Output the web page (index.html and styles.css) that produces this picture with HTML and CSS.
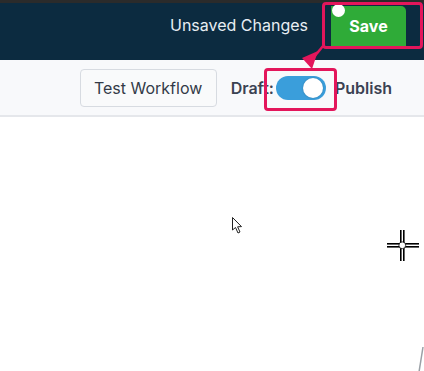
FILE: index.html
```html
<!DOCTYPE html>
<html lang="en">
<head>
    <meta charset="UTF-8">
    <meta name="viewport" content="width=device-width, initial-scale=1.0">
    <title>Workflow Editor</title>
    <link rel="stylesheet" href="styles.css">
</head>
<body>
    <header class="topbar">
        <span class="unsaved">Unsaved Changes</span>
        <button type="button" class="save-btn">Save</button>
        <span class="save-dot"></span>
    </header>

    <div class="toolbar">
        <button type="button" class="test-btn">Test Workflow</button>
        <span class="mode-label">Draft:</span>
        <span class="toggle"><span class="knob"></span></span>
        <span class="mode-label publish">Publish</span>
    </div>

    <main class="canvas"></main>

    <!-- annotation overlay -->
    <div class="mark mark-save"></div>
    <div class="mark mark-toggle"></div>
    <svg class="arrow" width="40" height="40" viewBox="0 0 40 40">
        <line x1="23" y1="3" x2="14" y2="14" stroke="#e3165b" stroke-width="2.5" />
        <polygon points="2,15 18,8 12,26" fill="#e3165b" />
    </svg>

    <svg class="pointer" width="14" height="20" viewBox="0 0 14 20">
        <path d="M1.5 1.5 L1.5 14 L4.5 11.5 L7 17 L9 16 L6.6 10.8 L10.5 10.6 Z" fill="#fff" stroke="#222" stroke-width="1" stroke-linejoin="round" />
    </svg>

    <svg class="crosshair" width="34" height="34" viewBox="0 0 34 34">
        <rect x="14" y="1" width="1.6" height="31" fill="#000" />
        <rect x="17" y="1" width="1.6" height="31" fill="#000" />
        <rect x="1" y="14" width="32" height="1.6" fill="#000" />
        <rect x="1" y="17" width="32" height="1.6" fill="#000" />
        <circle cx="16.3" cy="16.3" r="3.4" fill="#fff" stroke="#000" stroke-width="0.8" />
    </svg>

    <svg class="corner-line" width="10" height="26" viewBox="0 0 10 26">
        <path d="M9 1 L5 26" stroke="#9aa0a6" stroke-width="1.5" fill="none" />
    </svg>
</body>
</html>
```

FILE: styles.css
```css
body {
    margin: 0;
    font-family: 'Inter', 'Liberation Sans', sans-serif;
    background-color: #fff;
    height: 100vh;
    overflow: hidden;
}

.topbar {
    position: relative;
    box-sizing: border-box;
    height: 60px;
    border-top: 3px solid #2b2b2b;
    background-color: #0c2b40;
    display: flex;
    justify-content: flex-end;
    align-items: flex-start;
    padding: 3px 18px 0;
    gap: 23px;
}

.unsaved {
    line-height: 39px;
    font-size: 16px;
    color: #e8eef3;
}

.save-btn {
    width: 75px;
    height: 41px;
    border: none;
    border-radius: 0 5px 0 0;
    background-color: #2fab38;
    color: #fff;
    font-family: inherit;
    font-size: 16px;
    font-weight: 700;
    padding: 0 0 2px;
}

.save-dot {
    position: absolute;
    left: 332px;
    top: 1px;
    width: 13px;
    height: 13px;
    border-radius: 50%;
    background-color: #fff;
}

.toolbar {
    height: 55px;
    border-bottom: 2px solid #e5e7eb;
    background-color: #f8f9fb;
    display: flex;
    justify-content: flex-end;
    align-items: center;
    padding-right: 32px;
}

.test-btn {
    width: 137px;
    height: 38px;
    border: 1px solid #d7dbe1;
    border-radius: 4px;
    background-color: #f9fafb;
    color: #333a48;
    font-family: inherit;
    font-size: 16px;
    margin-right: 14px;
    padding: 0;
}

.mode-label {
    font-size: 16px;
    font-weight: 600;
    color: #3b4252;
}

.publish {
    margin-left: 9px;
}

.toggle {
    position: relative;
    width: 50px;
    height: 24px;
    border-radius: 12px;
    background-color: #3a9edb;
    margin-left: 2px;
}

.knob {
    position: absolute;
    right: 3px;
    top: 2px;
    width: 20px;
    height: 20px;
    border-radius: 50%;
    background-color: #fff;
    box-shadow: 0 0 2px rgba(0, 0, 0, 0.25);
}

.canvas {
    height: 254px;
}

.mark {
    position: absolute;
    box-sizing: border-box;
    border: 3px solid #e3165b;
    border-radius: 4px;
}

.mark-save {
    left: 322px;
    top: 2px;
    width: 101px;
    height: 47px;
}

.mark-toggle {
    left: 264px;
    top: 68px;
    width: 73px;
    height: 43px;
}

.arrow {
    position: absolute;
    left: 300px;
    top: 43px;
}

.pointer {
    position: absolute;
    left: 231px;
    top: 216px;
}

.crosshair {
    position: absolute;
    left: 386px;
    top: 229px;
}

.corner-line {
    position: absolute;
    left: 414px;
    top: 346px;
}
```
